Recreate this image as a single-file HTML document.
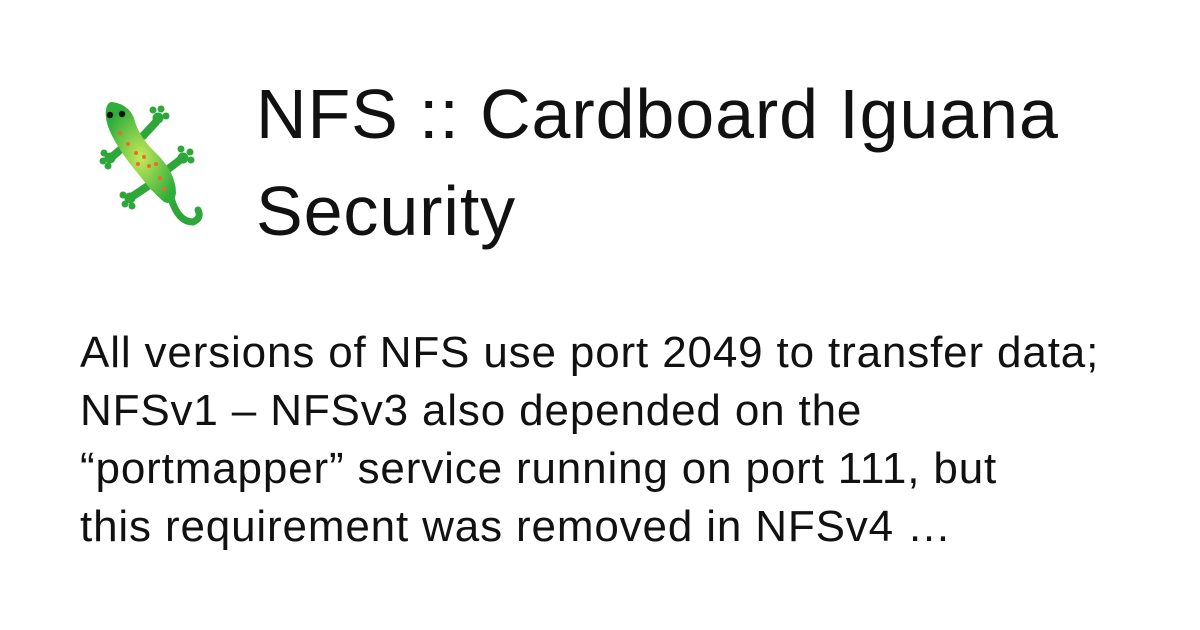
<!DOCTYPE html>
<html><head><style>
body{margin:0;width:1200px;height:630px;background:#fff;font-family:"Liberation Sans",sans-serif;color:#111;position:relative;overflow:hidden}
.t{position:absolute;left:256px;top:66px;font-size:70px;line-height:97px;letter-spacing:0.9px;white-space:nowrap}
.b{position:absolute;left:80px;top:324px;font-size:44px;line-height:58px;letter-spacing:0.85px;white-space:nowrap}
svg{position:absolute;left:98px;top:98px}
</style></head><body>
<svg width="110" height="130" viewBox="0 0 110 130">
<defs><radialGradient id="g" cx="50%" cy="55%" r="55%"><stop offset="0" stop-color="#c6e85a"/><stop offset="1" stop-color="#2fae3a"/></radialGradient></defs>
<g fill="#2ea63a" stroke="#2ea63a" stroke-linecap="round">
<path d="M30 45 L15 58" stroke-width="8"/>
<circle cx="12" cy="60" r="5"/><circle cx="6" cy="55" r="3"/><circle cx="5" cy="63" r="3"/><circle cx="10" cy="68" r="3"/>
<path d="M45 38 L58 24" stroke-width="8"/>
<circle cx="60" cy="20" r="5"/><circle cx="55" cy="12" r="3"/><circle cx="63" cy="11" r="3"/><circle cx="68" cy="18" r="3"/>
<path d="M50 88 L35 98" stroke-width="8"/>
<circle cx="32" cy="100" r="5"/><circle cx="25" cy="97" r="3"/><circle cx="27" cy="106" r="3"/><circle cx="34" cy="108" r="3"/>
<path d="M65 75 L82 62" stroke-width="8"/>
<circle cx="85" cy="60" r="5"/><circle cx="83" cy="51" r="3"/><circle cx="92" cy="54" r="3"/><circle cx="93" cy="62" r="3"/>
<path d="M73 100 Q80 124 95 124 Q104 120 100 112" stroke-width="7" fill="none"/>
</g>
<path d="M14 4 Q30 6 36 20 Q40 38 58 55 Q78 75 78 95 Q76 108 66 104 Q52 92 42 78 Q28 62 18 45 Q6 25 8 12 Q9 4 14 4Z" fill="url(#g)"/>
<circle cx="12" cy="17" r="3.2" fill="#111"/><circle cx="24" cy="16" r="3.2" fill="#111"/>
<g fill="#f06a2a"><circle cx="22" cy="35" r="2"/><circle cx="30" cy="46" r="2"/><circle cx="38" cy="55" r="2"/><circle cx="46" cy="59" r="2"/><circle cx="51" cy="68" r="2"/><circle cx="58" cy="66" r="2"/><circle cx="40" cy="66" r="2"/><circle cx="62" cy="80" r="2"/><circle cx="66" cy="91" r="2"/></g>
</svg>
<div class="t">NFS :: Cardboard Iguana<br>Security</div>
<div class="b">All versions of NFS use port 2049 to transfer data;<br>NFSv1 – NFSv3 also depended on the<br>“portmapper” service running on port 111, but<br>this requirement was removed in NFSv4 …</div>
</body></html>
